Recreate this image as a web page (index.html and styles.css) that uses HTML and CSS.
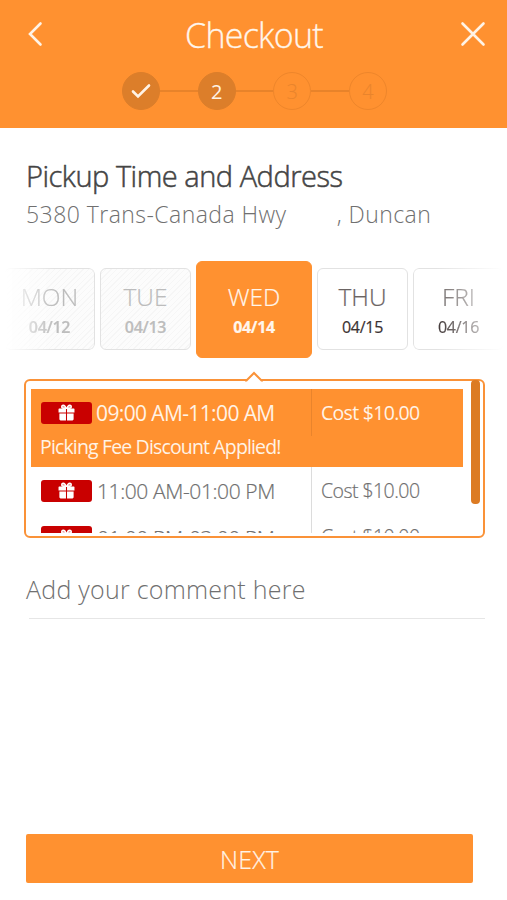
FILE: index.html
```html
<!DOCTYPE html>
<html lang="en">
<head>
<meta charset="utf-8">
<title>Checkout</title>
<link rel="stylesheet" href="styles.css">
</head>
<body>
<svg width="0" height="0" class="defs" aria-hidden="true">
  <symbol id="gift" viewBox="0 0 16 16">
    <path d="M1 4.200h6.500v3.800H.5V4.700zM8.500 4.200H15l.5.5V8h-7zM1.300 9h6.200v6.600h-5.200l-1-1zM8.500 9h6.200v5.600l-1 1H8.500z" fill="#fff"/>
    <path d="M7.500 4C6.800 1.500 5.500 1.100 4.700 1.200 3 1.500 3 4 5 4zM8.500 4C9.200 1.500 10.500 1.100 11.300 1.200 13 1.500 13 4 11 4z" fill="#fff" fill-opacity=".6" stroke="#fff" stroke-width="1.300"/>
  </symbol>
</svg>
<header class="header">
  <div class="bar">
    <svg class="back" width="16" height="26" viewBox="0 0 16 26"><path d="M13.500 2.500 3 13l10.500 10.500"/></svg>
    <h1 class="title">Checkout</h1>
    <svg class="close" width="26" height="26" viewBox="0 0 26 26"><path d="M2.500 2.500l21 21M23.500 2.500l-21 21"/></svg>
  </div>
  <div class="steps">
    <span class="step filled"><svg width="20" height="16" viewBox="0 0 20 16"><path d="M2 8.500l5 5L18 2.500"/></svg></span>
    <i class="link"></i>
    <span class="step filled">2</span>
    <i class="link"></i>
    <span class="step">3</span>
    <i class="link"></i>
    <span class="step">4</span>
  </div>
</header>
<main class="main">
  <h2 class="heading">Pickup Time and Address</h2>
  <div class="address"><span>5380 Trans-Canada Hwy</span><span class="city">, Duncan</span></div>
  <div class="days">
    <div class="day past fade-left"><b>MON</b><em>04/12</em></div>
    <div class="day past"><b>TUE</b><em>04/13</em></div>
    <div class="day active"><b>WED</b><em>04/14</em></div>
    <div class="day"><b>THU</b><em>04/15</em></div>
    <div class="day fade-right"><b>FRI</b><em>04/16</em></div>
  </div>
  <div class="panel">
    <svg class="pointer" width="20" height="11" viewBox="0 0 20 11"><path class="pointer-fill" d="M1 11 10 1.800 19 11z"/><path d="M1 9.500H2.500L10 2l7.500 7.500H19"/></svg>
    <div class="slots">
      <div class="slot selected">
        <div class="line">
          <span class="badge"><svg width="17" height="17"><use href="#gift"/></svg></span>
          <span class="time">09:00 AM-11:00 AM</span><span class="cost">Cost $10.00</span>
        </div>
        <div class="note">Picking Fee Discount Applied!</div>
      </div>
      <div class="slot">
        <div class="line">
          <span class="badge"><svg width="17" height="17"><use href="#gift"/></svg></span>
          <span class="time">11:00 AM-01:00 PM</span><span class="cost">Cost $10.00</span>
        </div>
      </div>
      <div class="slot">
        <div class="line">
          <span class="badge"><svg width="17" height="17"><use href="#gift"/></svg></span>
          <span class="time">01:00 PM-03:00 PM</span><span class="cost">Cost $10.00</span>
        </div>
      </div>
    </div>
    <div class="thumb"></div>
  </div>
  <div class="comment">Add your comment here</div>
</main>
<button class="next">NEXT</button>
</body>
</html>
```

FILE: styles.css
```css
* { box-sizing: border-box; }
body {
  margin: 0;
  height: 900px;
  overflow: hidden;
  display: flex;
  flex-direction: column;
  background: #fff;
  font-family: "Open Sans", sans-serif;
  font-weight: 300;
  color: #707070;
  white-space: nowrap;
}
svg { display: block; flex: none; }
.defs { position: absolute; }
.header { height: 128px; background: #ff9130; flex: none; }
.bar {
  height: 72px;
  padding: 0 21px 4px 27px;
  display: flex;
  align-items: center;
  justify-content: space-between;
}
.bar svg path, .step svg path { fill: none; stroke: #fff3e6; stroke-width: 2.6; stroke-linecap: round; }
.title { margin: 2px 0 0 5px; font-size: 34px; line-height: 40px; font-weight: 300; color: #fff6ec; letter-spacing: -.75px; -webkit-text-stroke: .3px #fff6ec; }
.steps { display: flex; align-items: center; justify-content: center; margin-left: 2px; }
.step {
  width: 38px;
  height: 38px;
  border-radius: 50%;
  border: 1px solid #ee862b;
  color: #e9842c;
  display: flex;
  align-items: center;
  justify-content: center;
  font-size: 20px;
}
.step.filled { background: #dc7e2a; border-color: #dc7e2a; color: #fff3e6; font-weight: 400; }
.link { width: 37.600px; height: 2px; background: #e8832a; }
.main { padding: 28px 22px 0 24px; }
.heading { margin: 0 0 0 2px; font-size: 29px; line-height: 40px; font-weight: 300; color: #444; -webkit-text-stroke: .5px #444; letter-spacing: -.48px; }
.address { margin: 2px 0 0 2px; display: flex; font-size: 23px; line-height: 32px; color: #707070; letter-spacing: .45px; }
.city { margin-left: 50px; }
.days { margin: 31px -20px 0 -20px; height: 97px; display: flex; align-items: center; gap: 5px; }
.day {
  width: 91px;
  height: 82px;
  flex: none;
  border: 1.500px solid #e2e2e2;
  border-radius: 6px;
  display: flex;
  flex-direction: column;
  align-items: center;
  padding-top: 12px;
  margin-top: -1px;
}
.day b { font-size: 24.500px; line-height: 32px; font-weight: 300; color: #6b6463; -webkit-text-stroke: .2px; }
.day em { font-size: 16px; line-height: 29px; font-style: normal; font-weight: 400; color: #3b3232; -webkit-text-stroke: .2px; letter-spacing: -.3px; }
.past { background: repeating-linear-gradient(135deg, #fcfcfc 0 3px, #f6f6f6 3px 4px); }
.past b { color: #bcbcbc; }
.past em { color: #bdbdbd; font-weight: 600; }
.active { width: 116px; height: 97px; background: #ff9130; border-color: #ff9130; padding-top: 19px; margin-top: 0; }
.active b { color: #fff6ec; }
.active em { color: #fff6ec; font-weight: 700; }
.fade-left { mask-image: linear-gradient(90deg, transparent, #000 55%); }
.fade-right { mask-image: linear-gradient(270deg, transparent, #000 75%); }
.panel {
  position: relative;
  margin-top: 21px;
  width: 461px;
  height: 159px;
  border: 2.500px solid #fa9238;
  border-radius: 6px;
  padding: 8px 0 0 5px;
}
.pointer { position: absolute; left: 218px; top: -10px; }
.pointer path { fill: none; stroke: #fa9238; stroke-width: 2; }
.pointer .pointer-fill { fill: #fff; stroke: none; }
.slots { width: 432px; height: 144px; overflow: hidden; }
.slot { height: 46.500px; }
.slot.selected { height: 78px; background: #ff9130; color: #fff3e6; }
.line { height: 46.500px; display: flex; align-items: center; padding-left: 10px; }
.badge { width: 51px; height: 22px; margin-top: 1px; border-radius: 3px; background: #c90000; display: flex; align-items: center; justify-content: center; }
.time { width: 220px; height: 100%; line-height: 49px; padding-left: 5px; font-size: 21px; letter-spacing: -.4px; border-right: 1px solid #dcdcdc; -webkit-text-stroke: .2px; }
.cost { padding-left: 9px; font-size: 19.500px; letter-spacing: -.55px; -webkit-text-stroke: .2px; }
.selected .time { border-color: #e9842c; letter-spacing: -.62px; padding-left: 4px; -webkit-text-stroke: 0; }
.selected .cost { letter-spacing: -.7px; -webkit-text-stroke: 0; }
.selected .time, .selected .cost, .note { font-weight: 400; }
.note { padding-left: 9px; font-size: 19.500px; line-height: 22px; letter-spacing: -.85px; }
.thumb { position: absolute; right: 3px; top: -1px; width: 9px; height: 124px; border-radius: 4px; background: #dc7b23; }
.comment { margin: 31px 0 0 5px; text-indent: -3px; width: 456px; height: 50px; line-height: 41px; border-bottom: 1.500px solid #e6e6e6; font-size: 25px; letter-spacing: .25px; }
.next {
  margin: auto 0 17px 26px;
  width: 447px;
  height: 49px;
  padding: 0;
  border: 0;
  border-radius: 2px;
  background: #ff9130;
  color: #fff3e6;
  font: 300 25px/51px "Open Sans", sans-serif;
  letter-spacing: .2px;
  -webkit-text-stroke: .2px;
}
```
